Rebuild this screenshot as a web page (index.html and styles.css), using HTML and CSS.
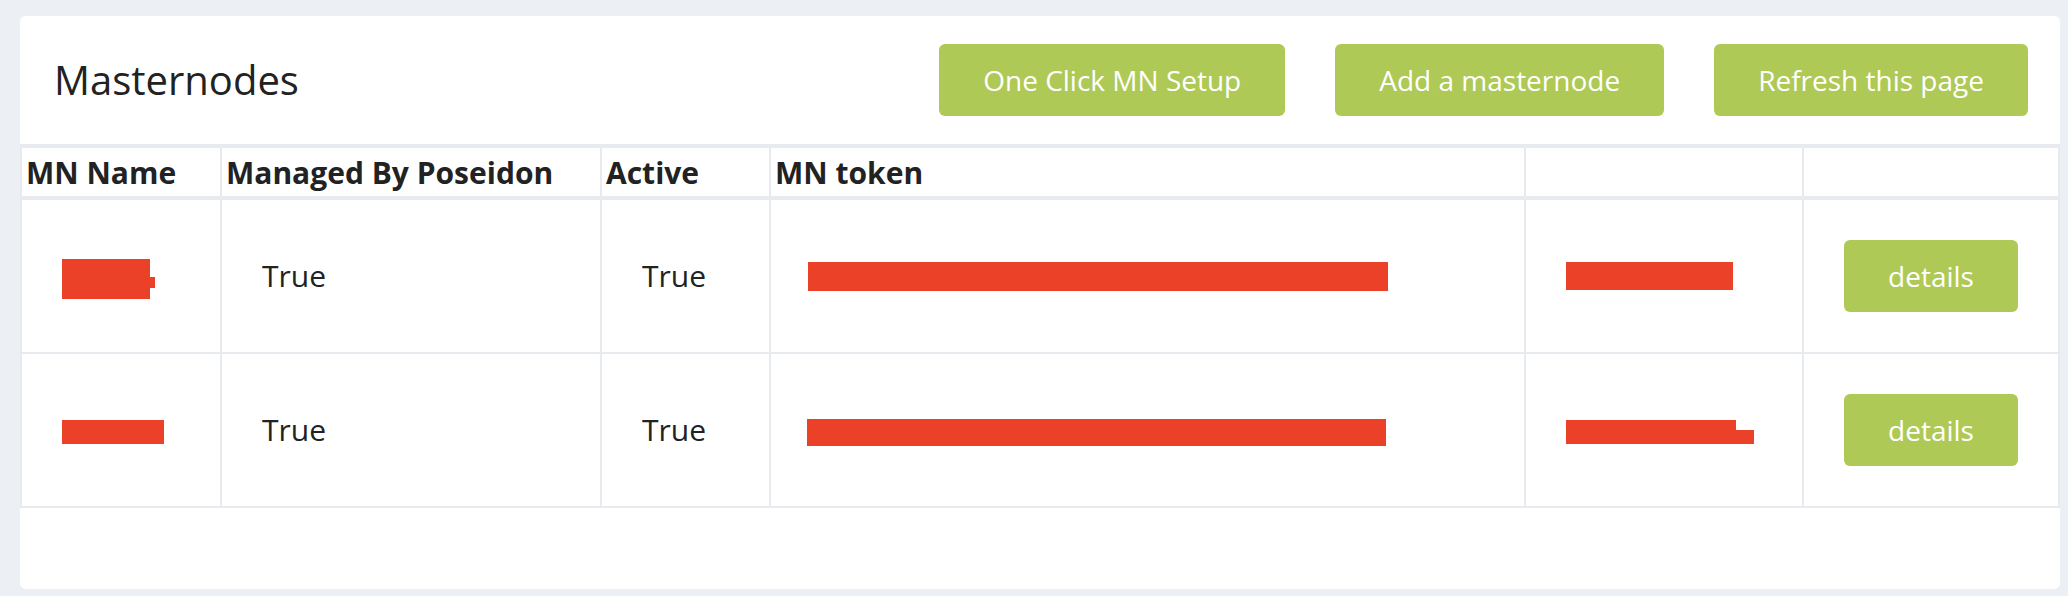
FILE: index.html
```html
<!DOCTYPE html>
<html lang="en">
<head>
<meta charset="utf-8">
<title>Masternodes</title>
<link rel="stylesheet" href="styles.css">
</head>
<body>
<div class="card">
  <div class="card-header">
    <h1 class="title">Masternodes</h1>
    <div class="actions">
      <button class="btn btn-setup">One Click MN Setup</button>
      <button class="btn btn-add">Add a masternode</button>
      <button class="btn btn-refresh">Refresh this page</button>
    </div>
  </div>
  <table class="mn-table">
    <colgroup>
      <col class="c-name">
      <col class="c-managed">
      <col class="c-active">
      <col class="c-token">
      <col class="c-addr">
      <col class="c-action">
    </colgroup>
    <thead>
      <tr>
        <th>MN Name</th>
        <th>Managed By Poseidon</th>
        <th>Active</th>
        <th>MN token</th>
        <th></th>
        <th class="th-last"></th>
      </tr>
    </thead>
    <tbody>
      <tr>
        <td><span class="redact r-name1"></span></td>
        <td>True</td>
        <td>True</td>
        <td><span class="redact r-token1"></span></td>
        <td><span class="redact r-addr1"></span></td>
        <td><button class="btn btn-details">details</button></td>
      </tr>
      <tr>
        <td><span class="redact r-name2"></span></td>
        <td>True</td>
        <td>True</td>
        <td><span class="redact r-token2"></span></td>
        <td><span class="redact r-addr2"></span></td>
        <td><button class="btn btn-details">details</button></td>
      </tr>
    </tbody>
  </table>
</div>
</body>
</html>
```

FILE: styles.css
```css
* { box-sizing: border-box; }

html, body {
  margin: 0;
  background: #ecf0f4;
}

body {
  padding: 16px 8px 7px 20px;
  font-family: "Open Sans", "Noto Sans", "Liberation Sans", sans-serif;
  color: #222222;
}

.card {
  background: #ffffff;
  border-radius: 6px;
  padding-bottom: 81px;
  overflow: hidden;
}

.card-header {
  display: flex;
  align-items: center;
  padding: 28px 32px 28px 34px;
}

.title {
  flex: 1;
  margin: 0;
  font-size: 40px;
  font-weight: 400;
  line-height: 54px;
  color: #222222;
}

.actions {
  display: flex;
  gap: 50px;
}

.btn {
  font-family: "Open Sans", "Noto Sans", "Liberation Sans", sans-serif;
  background: #aec955;
  color: #ffffff;
  border: none;
  border-radius: 6px;
  height: 72px;
  padding: 0 44px;
  font-size: 28px;
  font-weight: 400;
  line-height: 72px;
  cursor: pointer;
}

.btn-details {
  display: block;
  width: 174px;
  padding: 0;
  text-align: center;
}

.mn-table {
  width: 100%;
  table-layout: fixed;
  border-collapse: collapse;
  border-top: 4px solid #e7eaee;
}

.c-name { width: 200px; }
.c-managed { width: 380px; }
.c-active { width: 169px; }
.c-token { width: 755px; }
.c-addr { width: 278px; }

.mn-table th,
.mn-table td {
  border: 2px solid #e7eaee;
  text-align: left;
}

.mn-table th {
  font-size: 30px;
  font-weight: 700;
  line-height: 42px;
  padding: 4px 4px 2px;
  border-bottom-width: 4px;
  vertical-align: bottom;
  color: #222222;
  white-space: nowrap;
}

.mn-table td {
  font-size: 30px;
  padding: 40px 40px;
  line-height: 40px;
  vertical-align: middle;
  font-weight: 400;
  color: #222222;
}

.redact {
  display: block;
  background: #ea4128;
  position: relative;
}

.r-name1 {
  width: 88px;
  height: 40px;
  margin: 6px 0 0 0;
}
.r-name1::after {
  content: "";
  position: absolute;
  left: 86px;
  top: 18px;
  width: 7px;
  height: 11px;
  background: #ea4128;
}

.r-name2 {
  width: 102px;
  height: 24px;
  margin-top: 4px;
}

.r-token1 {
  width: 580px;
  height: 29px;
  margin-left: -3px;
}

.r-token2 {
  width: 579px;
  height: 27px;
  margin-left: -4px;
  margin-top: 4px;
}

.r-addr1 {
  width: 167px;
  height: 28px;
}

.r-addr2 {
  width: 170px;
  height: 24px;
  margin-top: 4px;
}
.r-addr2::after {
  content: "";
  position: absolute;
  left: 168px;
  top: 10px;
  width: 20px;
  height: 14px;
  background: #ea4128;
}
```
